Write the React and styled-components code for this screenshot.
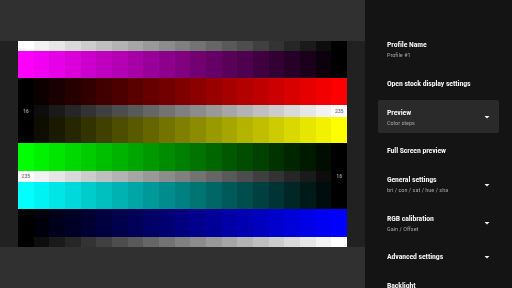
import React from 'react';
import styled, { createGlobalStyle } from 'styled-components';

const Global = createGlobalStyle`
  html, body { margin: 0; padding: 0; background: #141414; }
  body {
    width: 512px;
    height: 288px;
    overflow: hidden;
    font-family: "Roboto Condensed", "Liberation Sans Narrow", Roboto, "Noto Sans", sans-serif;
  }
  #root { width: 512px; height: 288px; }
`;

const Screen = styled.div`
  display: flex;
  width: 512px;
  height: 288px;
`;

const PreviewPane = styled.div`
  width: 365px;
  flex: none;
  display: flex;
  flex-direction: column;
  background: #303030;
`;

const TopBar = styled.div`
  height: 41px;
  flex: none;
`;

const BottomBar = styled.div`
  flex: 1;
`;

const Stage = styled.div`
  display: flex;
  padding: 0 18px;
  background: #212121;
`;

const Chart = styled.div`
  width: 329px;
  display: flex;
  flex-direction: column;
`;

const Strip = styled.div`
  display: grid;
  grid-template-columns: repeat(21, 1fr);
  height: ${(p) => p.$h}px;
`;

const Cell = styled.div`
  display: flex;
  align-items: center;
  justify-content: center;
  font: 500 5px/1 Roboto, sans-serif;
  color: ${(p) => (p.$light ? '#6e6e6e' : '#a8a8a8')};
`;

const Settings = styled.div`
  flex: 1;
  background: #141414;
  padding: 32px 13px 0;
  display: flex;
  flex-direction: column;
  gap: 5px;
  overflow: hidden;
`;

const Item = styled.div`
  flex: none;
  display: flex;
  align-items: center;
  padding: 7px 9.5px 5px 9px;
  border-radius: 2px;
  background: ${(p) => (p.$active ? '#2a2a2a' : 'transparent')};
`;

const Texts = styled.div`
  flex: 1;
  display: flex;
  flex-direction: column;
  min-width: 0;
  will-change: transform;
`;

const Title = styled.div`
  font-size: 7.8px;
  line-height: 12px;
  font-weight: 700;
  letter-spacing: -0.1px;
  color: #f0f0f0;
  white-space: nowrap;
`;

const Sub = styled.div`
  font-size: 6.2px;
  line-height: 9.5px;
  font-weight: 400;
  color: #a0a0a0;
  white-space: nowrap;
`;

const Caret = styled.svg`
  width: 12px;
  height: 12px;
  margin-right: -3.5px;
  flex: none;
  fill: #f2f2f2;
`;

const rows = [
  { rgb: [1, 1, 1], dir: 'down', h: 10 },
  { rgb: [1, 0, 1], dir: 'down', h: 27 },
  { rgb: [1, 0, 0], dir: 'up', h: 27 },
  { rgb: [1, 1, 1], dir: 'up', h: 12, labels: { 0: '16', 20: '235' } },
  { rgb: [1, 1, 0], dir: 'up', h: 26 },
  { rgb: [0, 1, 0], dir: 'down', h: 28 },
  { rgb: [1, 1, 1], dir: 'down', h: 11, labels: { 0: '235', 20: '16' } },
  { rgb: [0, 1, 1], dir: 'down', h: 27 },
  { rgb: [0, 0, 1], dir: 'up', h: 28 },
  { rgb: [1, 1, 1], dir: 'up', h: 10 },
];

const items = [
  { title: 'Profile Name', sub: 'Profile #1' },
  { title: 'Open stock display settings' },
  { title: 'Preview', sub: 'Color steps', caret: true, active: true },
  { title: 'Full Screen preview' },
  { title: 'General settings', sub: 'bri / con / sat / hue / sha', caret: true },
  { title: 'RGB calibration', sub: 'Gain / Offset', caret: true },
  { title: 'Advanced settings', caret: true },
  { title: 'Backlight' },
];

function StepRow({ row }) {
  const cells = Array.from({ length: 21 }, (_, i) => {
    const t = row.dir === 'up' ? i / 20 : (20 - i) / 20;
    const v = Math.round(255 * t);
    const [r, g, b] = row.rgb.map((c) => c * v);
    const label = row.labels ? row.labels[i] : undefined;
    return (
      <Cell key={i} $light={v > 128} style={{ background: `rgb(${r},${g},${b})` }}>
        {label}
      </Cell>
    );
  });
  return <Strip $h={row.h}>{cells}</Strip>;
}

export default function App() {
  return (
    <>
      <Global />
      <Screen>
        <PreviewPane>
          <TopBar />
          <Stage>
            <Chart>
              {rows.map((row, i) => (
                <StepRow key={i} row={row} />
              ))}
            </Chart>
          </Stage>
          <BottomBar />
        </PreviewPane>
        <Settings>
          {items.map((it) => (
            <Item key={it.title} $active={it.active}>
              <Texts>
                <Title>{it.title}</Title>
                {it.sub && <Sub>{it.sub}</Sub>}
              </Texts>
              {it.caret && (
                <Caret viewBox="0 0 24 24">
                  <path d="M7 10l5 5 5-5z" />
                </Caret>
              )}
            </Item>
          ))}
        </Settings>
      </Screen>
    </>
  );
}
